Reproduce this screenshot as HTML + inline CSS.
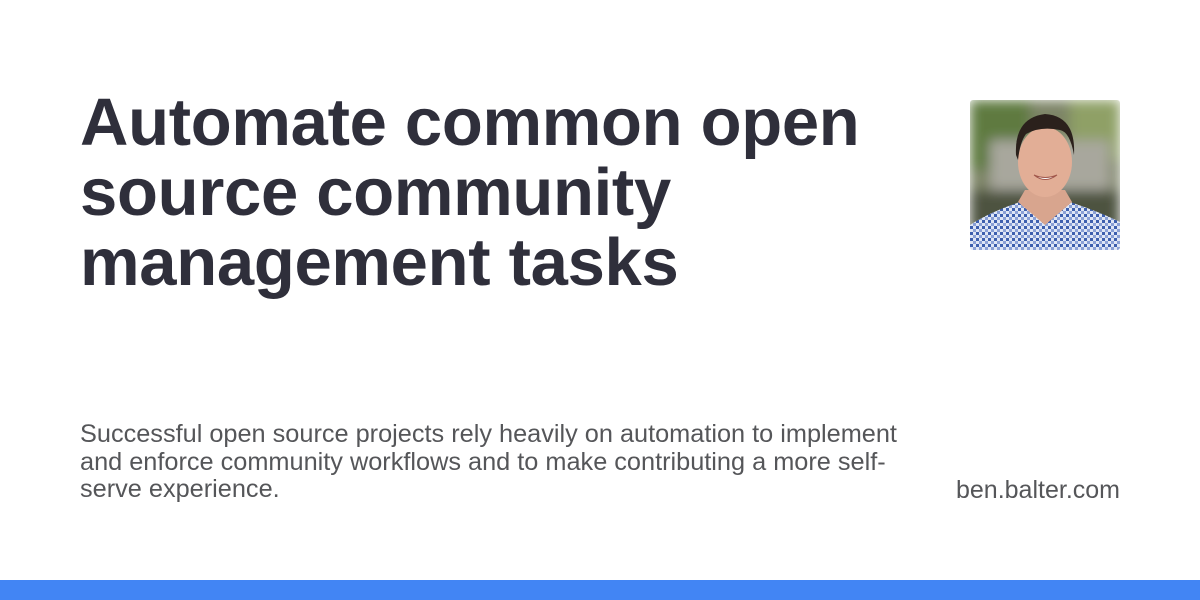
<!DOCTYPE html>
<html><head><meta charset="utf-8"><style>
html,body{margin:0;padding:0;width:1200px;height:600px;background:#fff;overflow:hidden;font-family:"Liberation Sans",Arial,sans-serif;position:relative}
h1{position:absolute;left:80px;top:88px;margin:0;font-size:67px;line-height:70px;font-weight:bold;color:#2f2f3b;width:840px;letter-spacing:-0.3px}
.desc{position:absolute;left:80px;top:421px;width:840px;font-size:25.3px;line-height:27.5px;color:#555659}
.site{position:absolute;right:80px;top:476px;font-size:25px;color:#555659}
.bar{position:absolute;left:0;top:580px;width:1200px;height:20px;background:#4285f4}
.photo{position:absolute;left:970px;top:100px;width:150px;height:150px;border-radius:3px;overflow:hidden}
</style></head><body>
<h1>Automate common open source community management tasks</h1>
<div class="desc">Successful open source projects rely heavily on automation to implement and enforce community workflows and to make contributing a more self-serve experience.</div>
<div class="site">ben.balter.com</div>
<div class="photo">
<svg width="150" height="150" viewBox="0 0 150 150">
<defs>
<filter id="b"><feGaussianBlur stdDeviation="6"/></filter>
<pattern id="chk" width="6" height="6" patternUnits="userSpaceOnUse"><rect width="6" height="6" fill="#dfe6f5"/><rect width="3" height="3" fill="#3d5fae"/><rect x="3" y="3" width="3" height="3" fill="#8aa0d6"/></pattern>
</defs>
<g filter="url(#b)">
<rect width="150" height="150" fill="#7d8466"/>
<rect x="0" y="0" width="60" height="70" fill="#5f7a3f"/>
<rect x="100" y="0" width="50" height="60" fill="#8fa066"/>
<rect x="20" y="40" width="120" height="60" fill="#a8a79d"/>
<rect x="0" y="90" width="150" height="40" fill="#4e5340"/>
</g>
<path d="M0 125 Q20 112 50 102 L75 118 L100 102 Q130 112 150 122 L150 150 L0 150Z" fill="url(#chk)"/>
<path d="M48 102 L75 125 L102 102 L95 90 L55 90Z" fill="#d8a58e"/>
<ellipse cx="75" cy="62" rx="27" ry="35" fill="#e2ae96"/>
<path d="M46 55 Q44 18 75 14 Q106 16 104 55 Q100 32 90 30 Q70 26 56 34 Q50 42 48 60Z" fill="#2b211c"/>
<path d="M64 75 Q75 84 87 75 Q75 80 64 75Z" fill="#fff" stroke="#a0564a" stroke-width="1"/>
</svg>
</div>
<div class="bar"></div>
</body></html>
